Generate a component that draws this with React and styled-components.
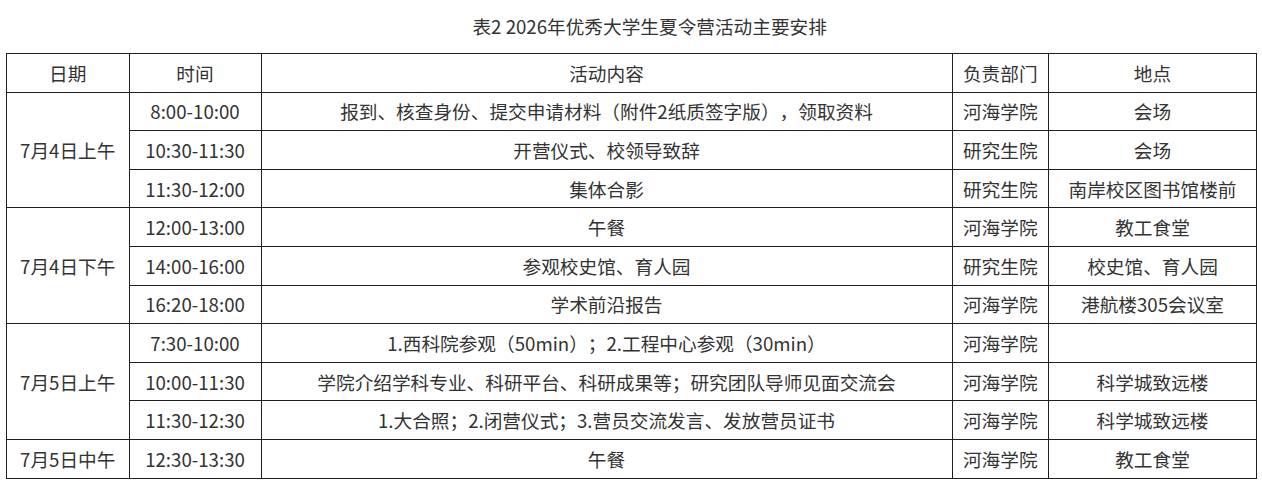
import React from "react";
import styled, { createGlobalStyle } from "styled-components";

const GlobalStyle = createGlobalStyle`
  html, body {
    margin: 0;
    padding: 0;
    background: #ffffff;
  }
  body {
    font-family: "Noto Sans CJK SC", "Noto Sans", sans-serif;
    color: #333333;
    text-spacing-trim: space-all;
  }
`;

const Page = styled.div`
  padding: 0 6px;
`;

const Title = styled.div`
  padding-top: 13px;
  height: 26px;
  line-height: 26px;
  margin-bottom: 14px;
  font-size: 18.67px;
  text-align: center;
  text-indent: 2em;
  color: #333333;
`;

const Table = styled.table`
  width: 1250px;
  border-collapse: collapse;
  table-layout: fixed;
  font-size: 18.67px;
`;

const Cell = styled.td`
  height: 37.6px;
  padding: 0 4px;
  border: 1px solid #1f1f1f;
  text-align: center;
  vertical-align: middle;
  white-space: nowrap;
  line-height: 24px;
  color: #333333;
  text-spacing-trim: space-all;
`;

const HeadCell = styled(Cell).attrs({ as: "th" })`
  font-weight: normal;
`;

const schedule = [
  {
    date: "7月4日上午",
    items: [
      ["8:00-10:00", "报到、核查身份、提交申请材料（附件2纸质签字版），领取资料", "河海学院", "会场"],
      ["10:30-11:30", "开营仪式、校领导致辞", "研究生院", "会场"],
      ["11:30-12:00", "集体合影", "研究生院", "南岸校区图书馆楼前"],
    ],
  },
  {
    date: "7月4日下午",
    items: [
      ["12:00-13:00", "午餐", "河海学院", "教工食堂"],
      ["14:00-16:00", "参观校史馆、育人园", "研究生院", "校史馆、育人园"],
      ["16:20-18:00", "学术前沿报告", "河海学院", "港航楼305会议室"],
    ],
  },
  {
    date: "7月5日上午",
    items: [
      ["7:30-10:00", "1.西科院参观（50min）；2.工程中心参观（30min）", "河海学院", ""],
      ["10:00-11:30", "学院介绍学科专业、科研平台、科研成果等；研究团队导师见面交流会", "河海学院", "科学城致远楼"],
      ["11:30-12:30", "1.大合照；2.闭营仪式；3.营员交流发言、发放营员证书", "河海学院", "科学城致远楼"],
    ],
  },
  {
    date: "7月5日中午",
    items: [["12:30-13:30", "午餐", "河海学院", "教工食堂"]],
  },
];

export default function App() {
  return (
    <Page>
      <GlobalStyle />
      <Title>表2 2026年优秀大学生夏令营活动主要安排</Title>
      <Table>
        <colgroup>
          <col style={{ width: "122.5px" }} />
          <col style={{ width: "132px" }} />
          <col style={{ width: "691px" }} />
          <col style={{ width: "96.5px" }} />
          <col style={{ width: "208px" }} />
        </colgroup>
        <thead>
          <tr>
            <HeadCell>日期</HeadCell>
            <HeadCell>时间</HeadCell>
            <HeadCell>活动内容</HeadCell>
            <HeadCell>负责部门</HeadCell>
            <HeadCell>地点</HeadCell>
          </tr>
        </thead>
        <tbody>
          {schedule.map((group) =>
            group.items.map((item, i) => (
              <tr key={group.date + i}>
                {i === 0 && <Cell rowSpan={group.items.length}>{group.date}</Cell>}
                {item.map((text, j) => (
                  <Cell key={j}>{text}</Cell>
                ))}
              </tr>
            ))
          )}
        </tbody>
      </Table>
    </Page>
  );
}
